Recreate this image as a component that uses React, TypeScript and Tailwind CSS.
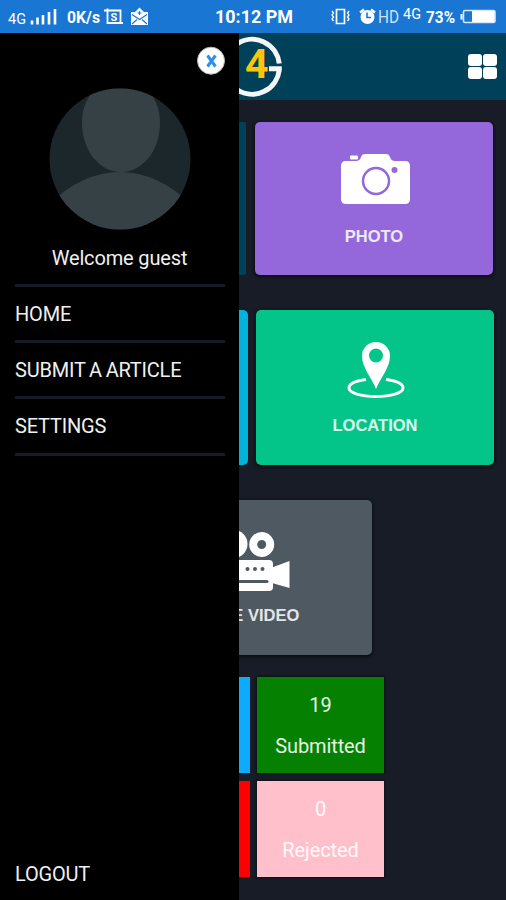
function StatusBar() {
    return (
        <div className="flex h-[33px] shrink-0 items-center bg-[#1976d2] text-white">
            <svg className="h-[33px] w-[506px]" viewBox="0 0 506 33" fill="none" stroke="white">
                <g fill="white" stroke="none" fontFamily="Roboto, sans-serif">
                    <text x="8" y="24" fontSize="15" textLength="18" lengthAdjust="spacingAndGlyphs">4G</text>
                    <text x="67" y="23" fontSize="16.500" fontWeight="700" textLength="33" lengthAdjust="spacingAndGlyphs">0K/s</text>
                    <text x="215" y="23" fontSize="18" fontWeight="700" textLength="78" lengthAdjust="spacingAndGlyphs">10:12 PM</text>
                    <text x="378" y="23" fontSize="18" fillOpacity="0.8" textLength="21" lengthAdjust="spacingAndGlyphs">HD</text>
                    <text x="403" y="19" fontSize="15" textLength="18" lengthAdjust="spacingAndGlyphs">4G</text>
                    <text x="426" y="23" fontSize="16.500" fontWeight="700" textLength="29" lengthAdjust="spacingAndGlyphs">73%</text>
                </g>
                {/* signal */}
                <path d="M32 20.500v4M37.500 17.500v7M43 15v9.500M49 12v12.500M55 9v15.500" strokeWidth="2.600" />
                {/* screenshot */}
                <path d="M104 10.500h16.500v13M107.500 8.500v14.500h15.500" strokeWidth="1.800" />
                <text x="110.500" y="21" fontSize="11" fontWeight="700" fill="white" stroke="none" fontFamily="Roboto, sans-serif">S</text>
                {/* mail */}
                <path d="M131 12h4l4.500-4.500L144 12h4v13h-17z" fill="white" stroke="none" />
                <path d="M132 14.500l7.500 5 7.500-5M132 24l5-4.500M147 24l-5-4.500M139.500 11v4M137.500 13h4" stroke="#1976d2" strokeWidth="1.100" />
                {/* vibrate */}
                <path d="M336.500 9.500h8v14h-8z" strokeWidth="1.700" />
                <path d="M332 11l1.500 2-1.500 2 1.500 2-1.500 2 1.500 2M349 11l-1.500 2 1.500 2-1.500 2 1.500 2-1.500 2" strokeWidth="1.300" />
                {/* alarm */}
                <circle cx="367.500" cy="17" r="7" fill="white" stroke="none" />
                <path d="M360 12.500l4-3M375 12.500l-4-3" strokeWidth="2.200" />
                <path d="M367 12.500v5h4" stroke="#1976d2" strokeWidth="1.600" />
                {/* battery */}
                <rect x="463.500" y="10.500" width="31.500" height="12" rx="1.500" stroke="#d7e6f8" strokeWidth="1.600" />
                <path d="M472 11h22.500v11H472z" fill="white" stroke="none" />
                <path d="M461.500 14v5.500" strokeWidth="2" />
            </svg>
        </div>
    );
}

const menuItems = ["HOME", "SUBMIT A ARTICLE", "SETTINGS"];

function Drawer() {
    return (
        <aside className="flex w-[239px] shrink-0 flex-col bg-black text-[#f0f0f0]">
            <button className="mt-[13px] mr-[13px] size-[29px] self-end">
                <svg viewBox="0 0 29 29" className="size-full">
                    <circle cx="14" cy="14.700" r="13.500" fill="#fff" stroke="#b8b8b8" strokeWidth="1" />
                    <path d="M10.500 9.500l8 11M18.500 9.500l-8 11" stroke="#2f8fef" strokeWidth="3" />
                </svg>
            </button>
            <svg viewBox="0 0 142 142" className="mt-[13px] ml-[49px] size-[142px]">
                <clipPath id="avatar"><circle cx="71" cy="71" r="70.500" /></clipPath>
                <g clipPath="url(#avatar)">
                    <path d="M0 0h142v142H0z" fill="#1b272b" />
                    <path d="M33 35C33 10 48-8 72-8s39 18 39 43c0 27-17 49-39 49S33 62 33 35z" fill="#364146" />
                    <path d="M0 116Q34 84 71 84t71 32v28H0z" fill="#364146" />
                </g>
            </svg>
            <p className="mt-[13px] h-[31px] text-center text-[20px] leading-[31px] tracking-[-0.15px]">Welcome guest</p>
            <nav className="mt-[10px] mr-[14px] ml-[15px] border-t-[3px] border-[#171a27]">
                {menuItems.map((item) => (
                    <a key={item} className="block h-[56.200px] border-b-[3px] border-[#171a27] text-[20px] leading-[55px] tracking-[-0.2px] [word-spacing:-1px]">{item}</a>
                ))}
            </nav>
            <a className="mt-auto mb-[10px] ml-[15px] text-[20px] leading-[32px] tracking-[-0.2px]">LOGOUT</a>
        </aside>
    );
}

function TileLabel({ text }: { text: string }) {
    return <span className="font-['Liberation_Sans',sans-serif] text-[16.500px] leading-[24px] font-bold text-white/85">{text}</span>;
}

export default function App() {
    return (
        <div className="flex h-[900px] w-[506px] flex-col overflow-hidden bg-[#171c26] font-['Roboto',sans-serif]">
            <StatusBar />
            <div className="flex min-h-0 flex-1">
                <Drawer />
                <main className="min-w-0 flex-1 overflow-hidden">
                    <header className="flex h-[67px] items-center justify-between bg-[#00415a] pr-[9px]">
                        <svg viewBox="239 33 50 67" className="h-[67px] w-[50px]">
                            <path d="M279.300 63.500A27.500 27.500 0 1 0 279.300 70V68.700H269" fill="none" stroke="#f4f6f7" strokeWidth="5" />
                            <text x="245" y="78" fontSize="41" fontWeight="700" fill="#fcc50c" fontFamily="Roboto, sans-serif">4</text>
                        </svg>
                        <div className="mb-[1px] grid grid-cols-2 gap-[1px]">
                            <i className="h-[12px] w-[14px] rounded-[3px] bg-white" />
                            <i className="h-[12px] w-[14px] rounded-[3px] bg-white" />
                            <i className="h-[12px] w-[14px] rounded-[3px] bg-white" />
                            <i className="h-[12px] w-[14px] rounded-[3px] bg-white" />
                        </div>
                    </header>

                    <section className="mt-[22px] flex h-[153px] gap-[9px]">
                        <div className="w-[7px] rounded-r-[2px] bg-[#00415a]" />
                        <div className="flex w-[238px] flex-col items-center rounded-[5px] bg-[#9467da] shadow-[0_1px_3px_1px_#0b0e14]">
                            <svg viewBox="0 0 70 54" className="mt-[31px] ml-[3px] h-[54px] w-[70px]" fill="white">
                                <path d="M5 8h10q4 0 5-4 1-3 4-3h21q3 0 4 3 1 4 5 4h10q5 0 5 5v33q0 5-5 5H5q-5 0-5-5V13q0-5 5-5z" />
                                <rect x="9" y="2.500" width="8" height="4" rx="1" />
                                <circle cx="35" cy="28" r="13" fill="none" stroke="#9467da" strokeWidth="2.500" />
                                <circle cx="53.500" cy="17" r="3" fill="#9467da" />
                            </svg>
                            <div className="mt-[17px] h-[24px]"><TileLabel text="PHOTO" /></div>
                        </div>
                    </section>

                    <section className="mt-[35px] flex h-[155px] gap-[8px]">
                        <div className="w-[9px] rounded-r-[5px] bg-[#00b3dc]" />
                        <div className="flex w-[238px] flex-col items-center rounded-[5px] bg-[#03c589] shadow-[0_1px_3px_1px_#0b0e14]">
                            <svg viewBox="0 0 60 58" className="mt-[31px] ml-[2px] h-[58px] w-[60px]">
                                <path d="M20 38.500C8 40 3 43 3 47c0 5 12 8.500 27 8.500S57 52 57 47c0-4-5-7-17-8.500" fill="none" stroke="white" strokeWidth="3" />
                                <path fillRule="evenodd" d="M30 48C26 37 16 27 16 15a14 14 0 0 1 28 0c0 12-10 22-14 33zM30 7.500a7 7 0 1 0 0 14 7 7 0 0 0 0-14z" fill="white" />
                            </svg>
                            <div className="mt-[14px] h-[24px]"><TileLabel text="LOCATION" /></div>
                        </div>
                    </section>

                    <section className="mt-[35px] -ml-[105px] flex h-[155px] w-[238px] flex-col items-center rounded-[5px] bg-[#4f5962] shadow-[0_1px_3px_1px_#0b0e14]">
                        <svg viewBox="0 0 74 64" className="mt-[29px] h-[64px] w-[74px]" fill="white">
                            <circle cx="17.500" cy="15" r="14" />
                            <circle cx="45.700" cy="15.500" r="8.500" fill="none" stroke="white" strokeWidth="8" />
                            <rect x="6" y="31" width="51" height="31" rx="4" />
                            <path d="M56 38.500l17.500-6.500v27L56 54z" />
                            <circle cx="31.500" cy="40" r="2" fill="#4f5962" />
                            <circle cx="39" cy="40" r="2" fill="#4f5962" />
                            <circle cx="46.500" cy="40" r="2" fill="#4f5962" />
                            <path d="M24 52.500h27" stroke="#4f5962" strokeWidth="3" strokeLinecap="round" />
                        </svg>
                        <div className="mt-[10px] h-[24px]"><TileLabel text="LIVE VIDEO" /></div>
                    </section>

                    <section className="mt-[22px] grid grid-cols-[11px_127px] gap-x-[7px] gap-y-[8px] text-center text-[20px] text-white/90">
                        <div className="h-[96px] bg-[#0cabff]" />
                        <div className="h-[96px] bg-[#058000] pt-[8px] leading-[41px] tracking-[-0.1px] shadow-[0_0_2px_1px_#0d1118]">
                            <p>19</p>
                            <p>Submitted</p>
                        </div>
                        <div className="h-[96px] bg-[#ff0000]" />
                        <div className="h-[96px] bg-[#ffc0cb] pt-[8px] leading-[41px] tracking-[-0.1px] shadow-[0_0_2px_1px_#0d1118]">
                            <p>0</p>
                            <p>Rejected</p>
                        </div>
                    </section>
                </main>
            </div>
        </div>
    );
}
